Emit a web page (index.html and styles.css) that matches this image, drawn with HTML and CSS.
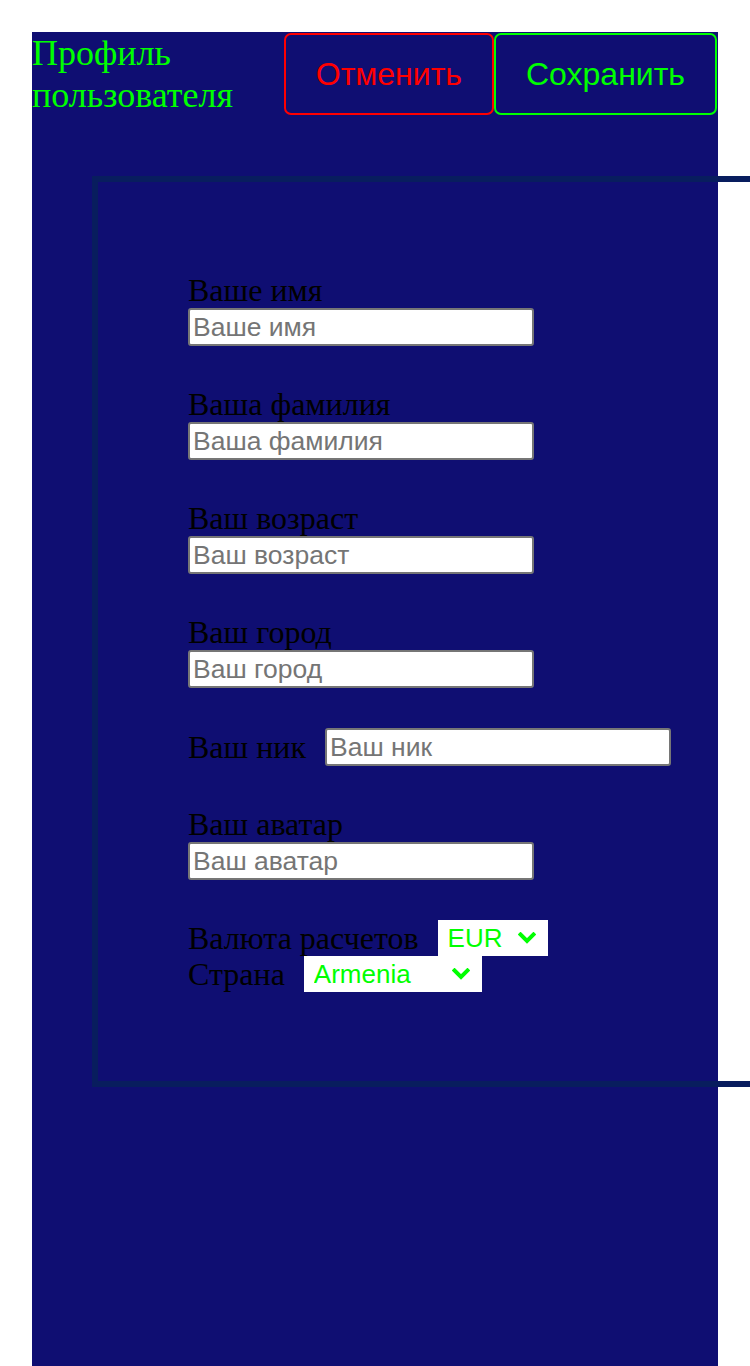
FILE: index.html
```html
<!DOCTYPE html>
<html lang="ru">
<head>
<meta charset="utf-8">
<title>Профиль пользователя</title>
<link rel="stylesheet" href="styles.css">
</head>
<body>
<div class="page">
  <header class="header">
    <h1 class="title">Профиль пользователя</h1>
    <div class="actions">
      <button type="button" class="btn btn-cancel">Отменить</button>
      <button type="button" class="btn btn-save">Сохранить</button>
    </div>
  </header>
  <form class="profile">
    <div class="field">
      <label class="label" for="f-name">Ваше имя</label>
      <input class="input" id="f-name" type="text" placeholder="Ваше имя">
    </div>
    <div class="field">
      <label class="label" for="f-surname">Ваша фамилия</label>
      <input class="input" id="f-surname" type="text" placeholder="Ваша фамилия">
    </div>
    <div class="field">
      <label class="label" for="f-age">Ваш возраст</label>
      <input class="input" id="f-age" type="text" placeholder="Ваш возраст">
    </div>
    <div class="field">
      <label class="label" for="f-city">Ваш город</label>
      <input class="input" id="f-city" type="text" placeholder="Ваш город">
    </div>
    <div class="field-inline">
      <label class="label label-inline" for="f-nick">Ваш ник</label>
      <input class="input" id="f-nick" type="text" placeholder="Ваш ник">
    </div>
    <div class="field">
      <label class="label" for="f-avatar">Ваш аватар</label>
      <input class="input" id="f-avatar" type="text" placeholder="Ваш аватар">
    </div>
    <div class="selects">
      <div class="select-row">
        <label class="label label-inline" for="f-currency">Валюта расчетов</label>
        <span class="select-wrap select-currency">
          <select class="select" id="f-currency">
            <option>EUR</option>
            <option>USD</option>
            <option>RUB</option>
          </select>
          <svg class="chevron" width="18" height="12" viewBox="0 0 18 12" aria-hidden="true"><polyline points="2.5,2.5 9,9 15.5,2.5" fill="none" stroke="#00ff00" stroke-width="4" stroke-linecap="square"/></svg>
        </span>
      </div>
      <div class="select-row">
        <label class="label label-inline" for="f-country">Страна</label>
        <span class="select-wrap select-country">
          <select class="select" id="f-country">
            <option>Armenia</option>
            <option>Russia</option>
            <option>Georgia</option>
          </select>
          <svg class="chevron" width="18" height="12" viewBox="0 0 18 12" aria-hidden="true"><polyline points="2.5,2.5 9,9 15.5,2.5" fill="none" stroke="#00ff00" stroke-width="4" stroke-linecap="square"/></svg>
        </span>
      </div>
    </div>
  </form>
</div>
</body>
</html>
```

FILE: styles.css
```css
html, body {
  background: #ffffff;
}

body {
  margin: 0;
  font-family: "Liberation Serif", "Times New Roman", serif;
}

.page {
  margin: 32px 32px 0 32px;
  background: #0f0e72;
  min-height: 100vh;
}

.header {
  display: flex;
  align-items: flex-start;
}

.title {
  flex: 1;
  margin: 0;
  font-weight: normal;
  font-size: 36px;
  line-height: 42px;
  color: #00ff00;
}

.actions {
  display: flex;
  gap: 0;
  margin: 1px 1px 0 0;
}

.btn {
  box-sizing: border-box;
  height: 82px;
  padding: 0 30px;
  background: transparent;
  border: 2px solid;
  border-radius: 7px;
  font-family: "Liberation Sans", Arial, sans-serif;
  font-size: 32px;
}

.btn-cancel {
  color: #ff0000;
  border-color: #ff0000;
}

.btn-save {
  color: #00ff00;
  border-color: #00ff00;
}

.profile {
  box-sizing: border-box;
  margin: 60px -60px 0 60px;
  padding: 90px 90px 89px 90px;
  border: 6px solid #081d5e;
  display: flex;
  flex-direction: column;
  gap: 40px;
}

.field {
  display: flex;
  flex-direction: column;
  align-items: flex-start;
}

.field-inline {
  display: flex;
  align-items: center;
}

.label {
  font-size: 32px;
  line-height: 36px;
  color: #000000;
}

.label-inline {
  margin-right: 19px;
}

.input {
  box-sizing: border-box;
  width: 346px;
  height: 38px;
  margin: 0;
  padding: 0 3px;
  border: 2px solid #767676;
  border-radius: 3px;
  background: #ffffff;
  font-family: "Liberation Sans", Arial, sans-serif;
  font-size: 26.5px;
  color: #000000;
}

.input::placeholder {
  color: #757575;
}

.selects {
  display: flex;
  flex-direction: column;
}

.select-row {
  display: flex;
  align-items: center;
  height: 36px;
}

.select-wrap {
  box-sizing: border-box;
  display: inline-flex;
  align-items: center;
  height: 36px;
  padding: 0 12px 0 10px;
  background: #ffffff;
}

.select-currency {
  width: 110px;
}

.select-country {
  width: 178px;
}

.select {
  flex: 1;
  min-width: 0;
  -webkit-appearance: none;
  appearance: none;
  border: none;
  outline: none;
  background: transparent;
  padding: 0;
  margin: 0;
  font-family: "Liberation Sans", Arial, sans-serif;
  font-size: 26px;
  color: #00ff00;
}

.chevron {
  flex: none;
  display: block;
}
```
